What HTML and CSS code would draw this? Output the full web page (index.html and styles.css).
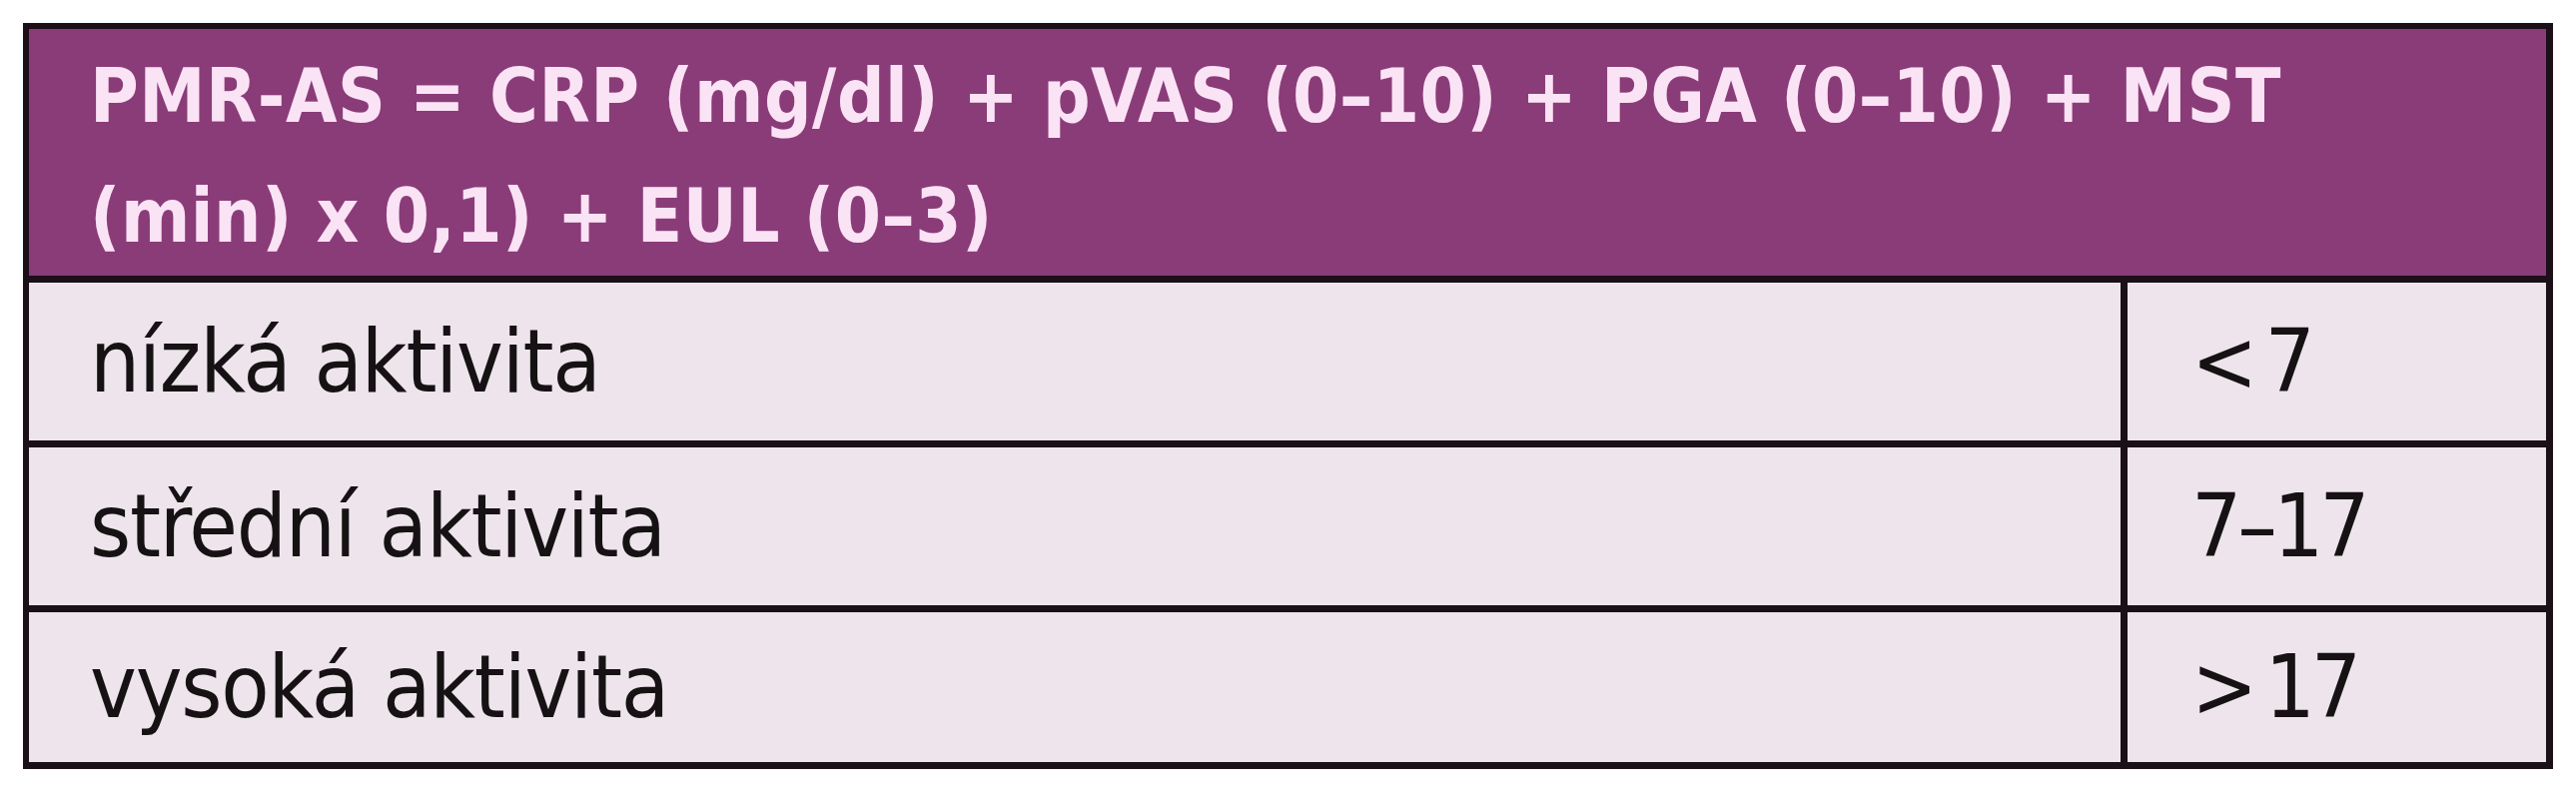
FILE: index.html
```html
<!DOCTYPE html>
<html lang="cs">
<head>
<meta charset="utf-8">
<title>PMR-AS</title>
<link rel="stylesheet" href="styles.css">
</head>
<body>
<table class="score">
  <colgroup>
    <col class="col-label">
    <col class="col-value">
  </colgroup>
  <thead>
    <tr>
      <th class="head" colspan="2">PMR-AS = CRP (mg/dl) + pVAS (0–10) + PGA (0–10) + MST<br>(min) x 0,1) + EUL (0–3)</th>
    </tr>
  </thead>
  <tbody>
    <tr class="row">
      <td class="label">nízká aktivita</td>
      <td class="value">&lt; 7</td>
    </tr>
    <tr class="row">
      <td class="label">střední aktivita</td>
      <td class="value">7–17</td>
    </tr>
    <tr class="row row-last">
      <td class="label">vysoká aktivita</td>
      <td class="value">&gt; 17</td>
    </tr>
  </tbody>
</table>
</body>
</html>
```
FILE: styles.css
```css
html, body {
  margin: 0;
  padding: 0;
  background: #ffffff;
}

body {
  padding: 23px 0 0 23px;
  font-family: "DejaVu Sans Condensed", "DejaVu Sans", sans-serif;
}

.score {
  border-collapse: separate;
  border-spacing: 0;
  table-layout: fixed;
  width: 2533px;
  border-top: 6px solid #1b0f18;
  border-left: 6px solid #1b0f18;
}

.col-label {
  width: 2101px;
}

.col-value {
  width: 426px;
}

.score th,
.score td {
  border-right: 7px solid #1b0f18;
  border-bottom: 7px solid #1b0f18;
  text-align: left;
  box-sizing: border-box;
}

.head {
  background: #8a3c78;
  color: #fbe3f6;
  font-weight: bold;
  font-size: 74px;
  letter-spacing: 0.5px;
  line-height: 120px;
  white-space: nowrap;
  padding: 7px 20px 0 61px;
  height: 254px;
  vertical-align: top;
}

.row td {
  background: #ede5eb;
  color: #161214;
  font-size: 88px;
  line-height: 1.15;
  height: 165px;
  padding: 0;
  vertical-align: middle;
}

.row-last td {
  height: 157px;
}

.label {
  letter-spacing: -1.2px;
  padding-left: 61px !important;
}

.value {
  letter-spacing: -4px;
  word-spacing: -10px;
  padding-left: 64px !important;
}
```
